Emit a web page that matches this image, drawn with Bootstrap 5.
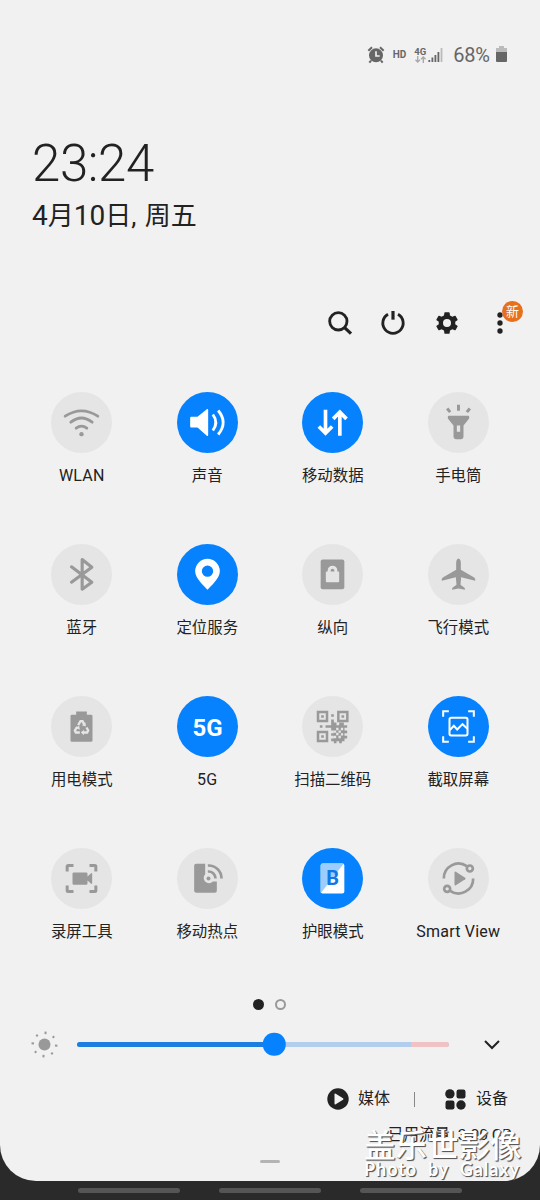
<!DOCTYPE html>
<html lang="zh-CN">
<head>
<meta charset="utf-8">
<meta name="viewport" content="width=device-width, initial-scale=1">
<title>快捷设置</title>
<link rel="stylesheet" href="https://cdn.jsdelivr.net/npm/bootstrap@5.3.0/dist/css/bootstrap.min.css">
<style>
body{background:#2a2a2a;color:#222;font-family:Roboto,"Noto Sans CJK SC",sans-serif;width:540px;height:1200px;overflow:hidden}
svg{display:block;flex:none;overflow:visible}
.panel{height:1181px;background:#f1f1f1;border-radius:0 0 36px 36px}
.status{height:108px;padding-right:33.5px;padding-top:1px;color:#666}
.hd{font-size:10px;font-weight:700;line-height:1}
.net{font-size:9.5px;font-weight:700;line-height:9px}
.pct{font-size:20px;line-height:24px;letter-spacing:-.3px}
.clock{height:182px;padding:29px 0 0 32px}
.time{font-size:51px;font-weight:300;line-height:54px;letter-spacing:-.4px}
.date{font-size:26px;line-height:32px;margin-top:9px;white-space:nowrap;word-spacing:2px}
.date .num{font-size:28px}
.actions{height:66px;padding-right:28px}
.new-tag{left:14px;top:-10px;width:21px;height:21px;background:#e86f1c;color:#fff;font-size:13px;line-height:21px}
.tiles{padding:36px 19px 0 19px}
.tile{height:152px}
.disc{width:61px;height:61px;background:#e5e5e5;color:#999;--bg:#e5e5e5}
.disc.on{background:#0682fe;color:#fff;--bg:#0682fe}
.lbl{font-size:15.4px;line-height:22px;margin-top:12px;white-space:nowrap}
.latin{font-size:16px;letter-spacing:.2px}
.dots{height:18px;margin-top:-5px;padding-right:1px}
.dot{width:11px;height:11px;background:#222}
.dot.off{background:none;border:2px solid #999}
.bright{height:62px;padding-left:30px}
.track{width:372px;height:5px;margin-left:18px;background:#b1cfed}
.fill{height:5px;background:#1c7fe0}
.warm{height:5px;background:#f0c2c3}
.knob{width:22.5px;height:22.5px;background:#0682fe;top:50%;transform:translate(-50%,-50%)}
.links{height:48px;padding-right:32px;font-size:16px}
.sep{width:1px;height:15px;background:#888}
.usage{height:22px;font-size:15.5px;line-height:22px;padding-right:28px;margin-top:1px}
.mark-cn{right:18px;top:1126px;color:#fff;width:158px;text-shadow:1px 1px 1px #555,1px 1px 0 #888;pointer-events:none}
.cn{font-size:31.5px;line-height:42px;font-weight:500;white-space:nowrap}
.en{font-family:Lato,sans-serif;font-size:18px;font-weight:700;line-height:18px;margin-top:-8px;letter-spacing:.95px;word-spacing:5.5px;white-space:nowrap}
.grip{width:20px;height:2.5px;background:#b4b4b4;margin-top:14px}
.navs{height:19px;gap:39.5px}
.nav-bar{width:101.5px;height:5px;background:#555}
</style>
</head>
<body>
<main class="panel position-relative">
  <header class="status d-flex align-items-center justify-content-end">
    <svg width="18" height="18" viewBox="-27 -27 54 54" style="margin-right:8px"><circle r="21" cy="1" fill="#666"/><path d="M-23-13L-12-23M23-13L12-23M-15 17l-5 6M15 17l5 6" stroke="#666" stroke-width="6" fill="none"/><path d="M0-11V3H11" stroke="#f1f1f1" stroke-width="5" fill="none"/></svg>
    <span class="hd" style="margin-right:8px">HD</span>
    <span class="d-flex flex-column align-items-center" style="margin-right:2px"><span class="net">4G</span>
      <svg width="11" height="7" viewBox="0 0 11 7"><path d="M2.7 0v6M.5 3.7L2.7 6 5 3.7M8.3 7V1M6 3.3L8.3 1l2.2 2.3" stroke="#aaa" stroke-width="1.4" fill="none"/></svg></span>
    <svg width="15" height="16" viewBox="0 0 15 16" style="margin-right:10px"><path d="M1.3 15v-2M4.4 15v-4.500M7.400 15V8M10.400 15V5" stroke="#666" stroke-width="1.8"/><path d="M13.5 15V1" stroke="#bbb" stroke-width="1.8"/></svg>
    <span class="pct" style="margin-right:6px">68%</span>
    <svg width="11" height="17" viewBox="0 0 11 17"><path d="M3 0h5v2h3v5H0V2h3z" fill="#bbb"/><path d="M0 6h11v9q0 1-1 1H1q-1 0-1-1z" fill="#666"/></svg>
  </header>

  <section class="clock">
    <div class="time">23:24</div>
    <div class="date"><span class="num">4</span>月<span class="num">10</span>日, 周五</div>
  </section>

  <section class="actions d-flex align-items-center justify-content-end">
    <svg width="24" height="24" viewBox="-36 -36 72 72" style="margin-right:29.5px"><circle cx="-5" cy="-5" r="26" fill="none" stroke="#222" stroke-width="8.5"/><path d="M13 13L33 32" stroke="#222" stroke-width="9.5"/></svg>
    <svg width="24" height="24" viewBox="-36 -36 72 72" style="margin-right:29.5px"><path d="M-15-26A30.500 30.500 0 1 0 15-26" fill="none" stroke="#222" stroke-width="8.5"/><path d="M0-36V-10" stroke="#222" stroke-width="9.5"/></svg>
    <svg width="24" height="24" viewBox="-12 -12 24 24" style="margin-right:29.5px"><path fill="#222" fill-rule="evenodd" d="M-2-10.8H2Q2.5-10.8 2.6-10.3L3-7.600Q4.200-7.100 5.200-6.300L7.800-7.300Q8.300-7.500 8.600-7L10.600-3.600Q10.800-3.100 10.400-2.800L8.200-1.200Q8.400 0 8.200 1.200L10.400 2.800Q10.800 3.100 10.600 3.600L8.600 7Q8.300 7.500 7.800 7.300L5.200 6.300Q4.200 7.100 3 7.600L2.600 10.300Q2.500 10.800 2 10.800H-2Q-2.500 10.800-2.600 10.300L-3 7.600Q-4.200 7.100-5.200 6.300L-7.800 7.300Q-8.300 7.500-8.600 7L-10.600 3.600Q-10.800 3.100-10.400 2.800L-8.200 1.200Q-8.400 0-8.200-1.200L-10.400-2.800Q-10.800-3.100-10.600-3.600L-8.600-7Q-8.300-7.500-7.800-7.300L-5.200-6.300Q-4.200-7.100-3-7.600L-2.600-10.300Q-2.500-10.800-2-10.800ZM0-4A4 4 0 1 0 0 4A4 4 0 1 0 0-4Z"/></svg>
    <span class="position-relative"><svg width="24" height="24" viewBox="-36 -36 72 72"><g fill="#222"><circle cy="-24" r="8"/><circle r="8"/><circle cy="24" r="8"/></g></svg><span class="new-tag position-absolute rounded-circle text-center">新</span></span>
  </section>

  <section class="tiles row row-cols-4 g-0">
    <div class="col tile d-flex flex-column align-items-center"><div class="disc rounded-circle"><svg width="61" height="61" viewBox="-91.5 -91.5 183 183"><path d="M-49-19Q0-51 49-19M-32-1Q0-26 32-1M-16 17Q0 5 16 17" fill="none" stroke="currentColor" stroke-width="8.5" stroke-linecap="round"/><circle cy="35" r="6.5" fill="currentColor"/></svg></div><div class="lbl latin">WLAN</div></div>
    <div class="col tile d-flex flex-column align-items-center"><div class="disc on rounded-circle"><svg width="61" height="61" viewBox="-91.5 -91.5 183 183"><path d="M-49-17H-30L-2-40Q2-42 2-37V37Q2 42-2 40L-30 15H-49Q-52 15-52 12V-14Q-52-17-49-17Z" fill="currentColor"/><path d="M16-24Q34 0 16 24M32-36Q62 0 32 36" fill="none" stroke="currentColor" stroke-width="8.5"/></svg></div><div class="lbl">声音</div></div>
    <div class="col tile d-flex flex-column align-items-center"><div class="disc on rounded-circle"><svg width="61" height="61" viewBox="-91.5 -91.5 183 183"><path d="M-21-38V32M-41 12L-21 32L-1 12M22 40V-31M2-11L22-31L42-11" fill="none" stroke="currentColor" stroke-width="11"/></svg></div><div class="lbl">移动数据</div></div>
    <div class="col tile d-flex flex-column align-items-center"><div class="disc rounded-circle"><svg width="61" height="61" viewBox="-91.5 -91.5 183 183"><path d="M0-53V-35M-34-42L-25-31M34-42L25-31" stroke="currentColor" stroke-width="9"/><path fill="currentColor" fill-rule="evenodd" d="M-29-20H29Q32-20 32-17V-12L15 9V43Q15 50 8 50H-8Q-15 50-15 43V9L-32-12V-17Q-32-20-29-20ZM-5 9V28H5V9Z"/></svg></div><div class="lbl">手电筒</div></div>

    <div class="col tile d-flex flex-column align-items-center"><div class="disc rounded-circle"><svg width="61" height="61" viewBox="-91.5 -91.5 183 183"><path d="M-30-23L31 23L2 44V-45L31-22L-30 23" fill="none" stroke="currentColor" stroke-width="9.500" stroke-linejoin="round" stroke-linecap="round"/></svg></div><div class="lbl">蓝牙</div></div>
    <div class="col tile d-flex flex-column align-items-center"><div class="disc on rounded-circle"><svg width="61" height="61" viewBox="-91.5 -91.5 183 183"><path fill="currentColor" fill-rule="evenodd" d="M0 46C-10 34-37 12-37-10A37 37 0 0 1 37-10C37 12 10 34 0 46ZM0-27A17 17 0 1 0 0 7A17 17 0 1 0 0-27Z"/></svg></div><div class="lbl">定位服务</div></div>
    <div class="col tile d-flex flex-column align-items-center"><div class="disc rounded-circle"><svg width="61" height="61" viewBox="-91.5 -91.5 183 183"><rect x="-35.500" y="-45" width="71" height="89" rx="6" fill="currentColor"/><rect x="-20" y="-9" width="40" height="32" rx="3" fill="var(--bg)"/><path d="M-10-7V-12A10 10 0 0 1 10-12V-7" fill="none" stroke="var(--bg)" stroke-width="9"/></svg></div><div class="lbl">纵向</div></div>
    <div class="col tile d-flex flex-column align-items-center"><div class="disc rounded-circle"><svg width="61" height="61" viewBox="-91.5 -91.5 183 183"><path fill="currentColor" d="M0-48Q7-46 7-34V-14L47 9Q52 13 50 19L8 8L6 31L18 40Q20 43 19 46L0 42L-19 46Q-20 43-18 40L-6 31L-8 8L-50 19Q-52 13-47 9L-7-14V-34Q-7-46 0-48Z"/></svg></div><div class="lbl">飞行模式</div></div>

    <div class="col tile d-flex flex-column align-items-center"><div class="disc rounded-circle"><svg width="61" height="61" viewBox="-91.5 -91.5 183 183"><path fill="currentColor" d="M-16-45H16V-35H29Q33-35 33-31V42Q33 46 29 46H-29Q-33 46-33 42V-31Q-33-35-29-35H-16Z"/><g fill="none" stroke="var(--bg)" stroke-width="7"><path d="M-10-4L-3-16H3L8-7M15 3L20 12L17 18H5M-5 18H-17L-20 12L-13 1"/></g><path fill="var(--bg)" d="M13 0L1-4L12-12ZM7 10V26L-2 18ZM-19 4L-7-2L-5 10Z"/></svg></div><div class="lbl">用电模式</div></div>
    <div class="col tile d-flex flex-column align-items-center"><div class="disc on rounded-circle"><svg width="61" height="61" viewBox="-91.5 -91.5 183 183"><text y="28" text-anchor="middle" font-size="72" font-weight="700" fill="currentColor">5G</text></svg></div><div class="lbl latin">5G</div></div>
    <div class="col tile d-flex flex-column align-items-center"><div class="disc rounded-circle"><svg width="61" height="61" viewBox="-91.5 -91.5 183 183"><g fill="none" stroke="currentColor" stroke-width="7.500"><path d="M-43.500-43.500h27v27h-27zM17.500-43.500h27v27h-27zM-43.500 16.500h27v27h-27z"/></g><path fill="currentColor" d="M-34-34h8v8h-8zM27-34h8v8h-8zM-34 26h8v8h-8zM-4-37h8v8h-8zM-38-4h8v8h-8zM-21-4h17v-17h8v9h8v8h8v-8h14v8h10v8h-8v8h8v8h-8v8h8v8h-8v8h-8v6h-8v-6h-8v6h-8v-6h-8v-8h8v-8h-8v-8h8v-8h-8v-8h-17z"/><path fill="var(--bg)" d="M4 12h7v7H4zM18 12h7v7h-7zM11 19h7v7h-7zM25 20h7v7h-7zM18 28h7v7h-7zM4 28h7v7H4zM11 4h7v7h-7zM25 4h7v7h-7z"/></svg></div><div class="lbl">扫描二维码</div></div>
    <div class="col tile d-flex flex-column align-items-center"><div class="disc on rounded-circle"><svg width="61" height="61" viewBox="-91.5 -91.5 183 183"><g fill="none" stroke="currentColor" stroke-width="6"><path d="M-46-29V-46H-29M29-46H46V-29M46 29V46H29M-29 46H-46V29"/><rect x="-27" y="-26" width="54" height="53" rx="5"/><path d="M-26 11L-14-2L-4 9L12-7L26 6"/></g></svg></div><div class="lbl">截取屏幕</div></div>

    <div class="col tile d-flex flex-column align-items-center"><div class="disc rounded-circle"><svg width="61" height="61" viewBox="-91.5 -91.5 183 183"><path d="M-43-21V-36Q-43-39-40-39H-24M24-39H40Q43-39 43-36V-21M43 21V36Q43 39 40 39H24M-24 39H-40Q-43 39-43 36V21" fill="none" stroke="currentColor" stroke-width="9"/><path fill="currentColor" d="M-23-18H14Q18-18 18-14V-6L28-15Q32-18 32-14V14Q32 18 28 15L18 6V15Q18 19 14 19H-23Q-27 19-27 15V-14Q-27-18-23-18Z"/></svg></div><div class="lbl">录屏工具</div></div>
    <div class="col tile d-flex flex-column align-items-center"><div class="disc rounded-circle"><svg width="61" height="61" viewBox="-91.5 -91.5 183 183"><path fill="currentColor" d="M-34-44H-7V-13A15 15 0 1 0 16 9H28V37Q28 43 22 43H-33Q-40 43-40 37V-38Q-40-44-34-44Z"/><circle cx="3" cy="0" r="6" fill="currentColor"/><path d="M1-21A21 21 0 0 1 24 0M1-39A39 39 0 0 1 42 0" fill="none" stroke="currentColor" stroke-width="8"/></svg></div><div class="lbl">移动热点</div></div>
    <div class="col tile d-flex flex-column align-items-center"><div class="disc on rounded-circle"><svg width="61" height="61" viewBox="-91.5 -91.5 183 183"><rect x="-35.500" y="-45" width="71" height="90" rx="6" fill="#fff"/><path d="M34-45H-30Q-35.500-45-35.500-39V44Z" fill="#9bcdff"/><text y="20" text-anchor="middle" font-size="60" font-weight="700" fill="#0f78e4">B</text></svg></div><div class="lbl">护眼模式</div></div>
    <div class="col tile d-flex flex-column align-items-center"><div class="disc rounded-circle"><svg width="61" height="61" viewBox="-91.5 -91.5 183 183"><g fill="none" stroke="currentColor" stroke-width="8"><path d="M-44 0A44 44 0 0 1 25-37M44 0A44 44 0 0 1-25 37"/><circle cx="34" cy="-30" r="9"/><circle cx="-34" cy="31" r="9"/></g><path fill="currentColor" d="M-12-18Q-12-22-8-20L20-2Q23 0 20 2L-8 20Q-12 22-12 18Z"/></svg></div><div class="lbl latin">Smart View</div></div>
  </section>

  <div class="dots d-flex justify-content-center align-items-center" style="gap:11px"><span class="dot rounded-circle"></span><span class="dot off rounded-circle"></span></div>

  <section class="bright d-flex align-items-center">
    <svg width="29" height="29" viewBox="-14.5 -14.500 29 29"><circle r="6" fill="#999"/><g stroke="#999" stroke-width="2" transform="rotate(5)"><path d="M0-13v2.500M0 13v-2.500M-13 0h2.500M13 0h-2.500M-9-9l1.500 1.500M9-9L7.500-7.500M-9 9l1.500-1.500M9 9L7.500 7.500"/></g></svg>
    <div class="track rounded-pill position-relative d-flex justify-content-between"><div class="fill rounded-start-pill" style="width:53%"></div><div class="warm rounded-end-pill" style="width:10.2%"></div><span class="knob position-absolute rounded-circle" style="left:53%"></span></div>
    <svg width="16" height="10" viewBox="0 0 16 10" style="margin-left:35px"><path d="M1 2L8 9L15 2" fill="none" stroke="#222" stroke-width="2"/></svg>
  </section>

  <section class="links d-flex align-items-center justify-content-end">
    <svg width="22" height="22" viewBox="0 0 22 22"><circle cx="11" cy="11" r="10.700" fill="#222"/><path d="M7.500 6.400Q7.500 5 8.700 5.700L16 10.200Q17 11 16 11.800L8.700 16.300Q7.500 17 7.500 15.600Z" fill="#f1f1f1"/></svg>
    <span style="margin-left:9px">媒体</span><span class="sep" style="margin:0 30px 0 24px"></span>
    <svg width="21" height="21" viewBox="0 0 21 21" fill="#222"><circle cx="4.900" cy="4.900" r="4.700"/><rect x="11.500" y=".5" width="9" height="9" rx="2.200"/><rect x=".5" y="11.500" width="9" height="9" rx="2.200"/><circle cx="16" cy="16" r="4.700"/></svg>
    <span style="margin-left:10px">设备</span>
  </section>
  <div class="usage text-end">已用流量: 3.00 GB</div>
  <div class="grip rounded-pill mx-auto"></div>
  <div class="mark-cn position-absolute"><div class="cn">盖乐世影像</div><div class="en">Photo by Galaxy</div></div>
</main>
<footer class="navs d-flex justify-content-center align-items-center"><span class="nav-bar rounded-pill"></span><span class="nav-bar rounded-pill"></span><span class="nav-bar rounded-pill"></span></footer>
<script src="https://cdn.jsdelivr.net/npm/bootstrap@5.3.0/dist/js/bootstrap.bundle.min.js"></script>
</body>
</html>
